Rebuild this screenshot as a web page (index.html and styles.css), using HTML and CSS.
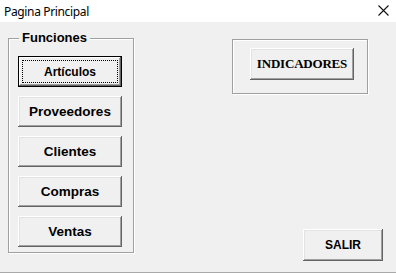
FILE: index.html
```html
<!DOCTYPE html>
<html lang="es">
<head>
<meta charset="utf-8">
<title>Pagina Principal</title>
<link rel="stylesheet" href="styles.css">
</head>
<body>
<div class="window">
  <div class="titlebar">
    <span class="title">Pagina Principal</span>
    <svg class="close" width="11" height="11" viewBox="0 0 11 11"><path d="M0.5 0.5 L10.5 10.5 M10.5 0.5 L0.5 10.5" stroke="#111" stroke-width="1.1" fill="none"/></svg>
  </div>
  <div class="client">
    <div class="frame funcs">
      <span class="legend">Funciones</span>
      <button class="btn btn-default"><span class="focus">Artículos</span></button>
      <button class="btn">Proveedores</button>
      <button class="btn">Clientes</button>
      <button class="btn">Compras</button>
      <button class="btn">Ventas</button>
    </div>
    <div class="right">
      <div class="frame ind">
        <button class="btn btn-serif">INDICADORES</button>
      </div>
      <button class="btn btn-small">SALIR</button>
    </div>
  </div>
</div>
</body>
</html>
```

FILE: styles.css
```css
* { box-sizing: border-box; }
html, body { margin: 0; padding: 0; background: #ffffff; }
body { width: 396px; height: 275px; overflow: hidden; font-family: "Liberation Sans", Arial, sans-serif; }

.window { width: 396px; height: 273px; border-bottom: 1px solid #a8a8a8; display: flex; flex-direction: column; }

.titlebar { height: 22px; background: #ffffff; display: flex; align-items: center; justify-content: space-between; padding: 0 7px 0 4px; }
.title { font-family: "Noto Sans", "Open Sans", sans-serif; font-size: 12px; color: #000; letter-spacing: -0.35px; }
.close { margin-top: -1px; }

.client { flex: 1; background: #f0f0f0; display: flex; padding: 16px 0 0 8px; }

.frame { position: relative; border: 1px solid #a0a0a0; box-shadow: inset 1px 1px #ffffff, 1px 1px #ffffff; }

.funcs { width: 126px; height: 215px; padding: 17px 0 0 9px; display: flex; flex-direction: column; gap: 9px; }
.legend { position: absolute; top: -9px; left: 10px; padding: 0 3px; background: #f0f0f0; font-weight: bold; font-size: 13px; line-height: 16px; color: #000; }

.btn { font-family: "Liberation Sans", Arial, sans-serif; font-weight: bold; font-size: 13.5px; color: #000; width: 104px; height: 31px; padding: 0; border: none; background: #f0f0f0; box-shadow: inset -1px -1px #646464, inset 1px 1px #ffffff, inset -2px -2px #a0a0a0, inset 2px 2px #e3e3e3; display: flex; align-items: center; justify-content: center; cursor: default; }

.btn-default { box-shadow: inset 0 0 0 1px #000, inset -2px -2px #646464, inset 2px 2px #ffffff, inset -3px -3px #a0a0a0; }
.focus { display: flex; align-items: center; justify-content: center; width: 96px; height: 23px; border: 1px dotted #000; font-size: 12px; }

.right { width: 151px; height: 223px; margin-left: 98px; display: flex; flex-direction: column; padding-top: 1px; }
.ind { width: 136px; height: 55px; padding: 8px 0 0 17px; }
.btn-serif { font-family: "Liberation Serif", "Times New Roman", serif; font-size: 13px; height: 32px; letter-spacing: -0.2px; }
.btn-small { width: 80px; height: 32px; margin-top: auto; align-self: flex-end; font-size: 12px; }
```
